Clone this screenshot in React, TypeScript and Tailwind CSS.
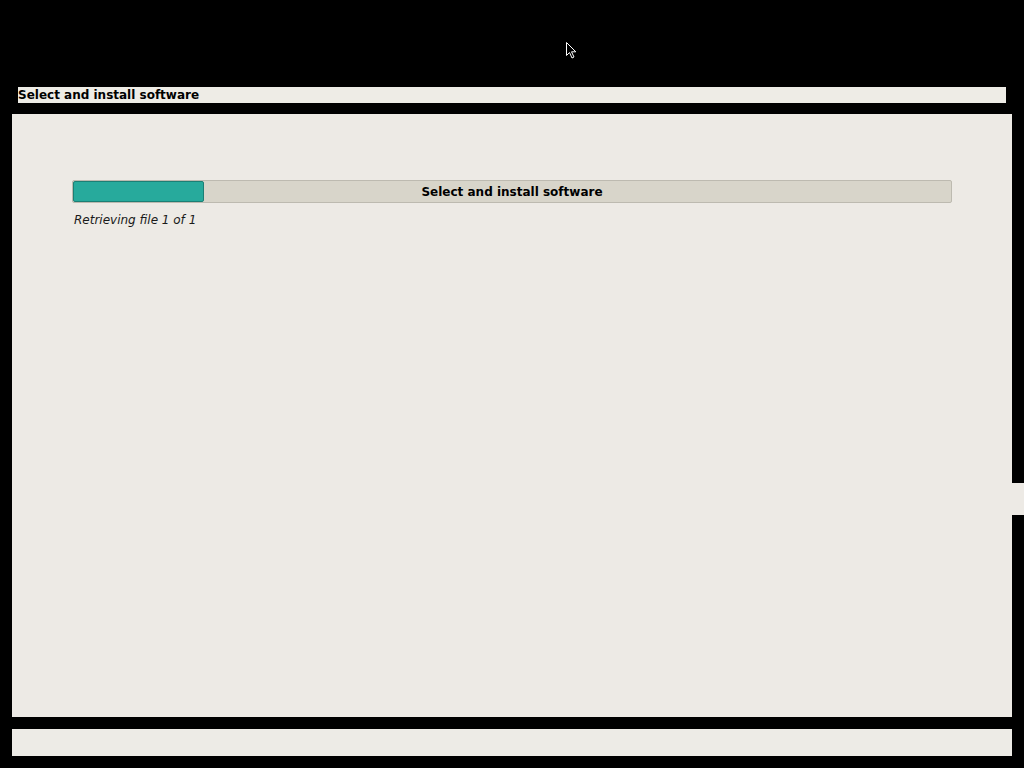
export default function App() {
  return (
    <div
      className="relative flex h-[768px] w-[1024px] flex-col overflow-hidden bg-black"
      style={{ fontFamily: '"DejaVu Sans", Verdana, sans-serif' }}
    >
      {/* window title strip */}
      <div className="mx-[18px] mt-[87px] flex h-[16px] items-start bg-[#eeece6] pt-[2px]">
        <span className="text-[12px] font-bold leading-[13px] text-black">Select and install software</span>
      </div>

      {/* main panel */}
      <div className="mx-[12px] mt-[11px] h-[603px] bg-[#edeae5] pl-[60px] pr-[60px] pt-[66px]">
        <div className="relative h-[23px] w-[880px] rounded-[2px] border border-[#bdbab0] bg-[#d8d5ca]">
          <div className="absolute left-0 top-0 h-full w-[131px] rounded-[2px] border border-[#1c7f75] bg-[#27aa9c]" />
          <div className="absolute inset-0 flex items-center justify-center">
            <span className="text-[12px] font-bold leading-none text-black">Select and install software</span>
          </div>
        </div>
        <p className="mt-[11px] pl-[2px] text-[12px] italic leading-none text-[#1a1a1a]">Retrieving file 1 of 1</p>
      </div>

      {/* bottom button strip */}
      <div className="mx-[12px] mt-[12px] h-[27px] bg-[#edebe6]" />

      {/* right edge notch */}
      <div className="absolute right-0 top-[483px] h-[32px] w-[12px] bg-[#edeae5]" />

      {/* mouse cursor */}
      <svg className="absolute left-[566px] top-[42px]" width="11" height="17" viewBox="0 0 11 17">
        <path d="M0.5 0.5 L0.5 13.5 L3.5 10.5 L6 16 L8 15 L5.5 9.8 L9.8 9.8 Z" fill="black" stroke="white" strokeWidth="1" />
      </svg>
    </div>
  )
}
